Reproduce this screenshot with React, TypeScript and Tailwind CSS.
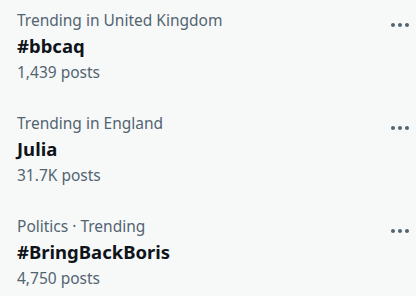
const trends = [
  { category: "Trending in United Kingdom", title: "#bbcaq", posts: "1,439 posts" },
  { category: "Trending in England", title: "Julia", posts: "31.7K posts" },
  { category: "Politics · Trending", title: "#BringBackBoris", posts: "4,750 posts" },
];

const MoreIcon = () => (
  <svg viewBox="0 0 24 24" className="w-[24px] h-[24px] fill-[#536471]">
    <path d="M3 12c0-1.1.9-2 2-2s2 .9 2 2-.9 2-2 2-2-.9-2-2zm9 2c1.1 0 2-.9 2-2s-.9-2-2-2-2 .9-2 2 .9 2 2 2zm7 0c1.1 0 2-.9 2-2s-.9-2-2-2-2 .9-2 2 .9 2 2 2z" />
  </svg>
);

export default function App() {
  return (
    <div className="bg-[#f7f9f9] w-[416px] h-[296px] font-['Noto_Sans',sans-serif]">
      {trends.map((t) => (
        <div key={t.title} className="flex justify-between items-start pl-[17px] pr-[4px] pt-[7px] pb-[18px]">
          <div className="flex flex-col">
            <span className="h-[26px] leading-[26px] text-[15.5px] text-[#536471]">{t.category}</span>
            <span className="h-[26px] leading-[26px] text-[18.5px] font-bold text-[#0f1419]">{t.title}</span>
            <span className="h-[26px] leading-[26px] text-[15.5px] text-[#536471]">{t.posts}</span>
          </div>
          <div className="mt-[6px]">
            <MoreIcon />
          </div>
        </div>
      ))}
    </div>
  );
}
